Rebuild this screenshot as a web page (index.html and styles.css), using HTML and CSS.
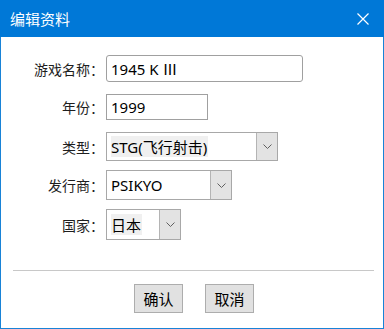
FILE: index.html
```html
<!DOCTYPE html>
<html lang="zh-CN">
<head>
    <meta charset="UTF-8">
    <title>编辑资料</title>
    <link rel="stylesheet" href="styles.css">
</head>
<body>
    <div class="dialog">
        <div class="dialog-title">
            <span class="title-text">编辑资料</span>
            <span class="close-btn">
                <svg width="12" height="12" viewBox="0 0 12 12">
                    <path d="M0.5 0.5 L11.5 11.5 M11.5 0.5 L0.5 11.5" stroke="#fff" stroke-width="1.2" fill="none"/>
                </svg>
            </span>
        </div>

        <div class="form">
            <div class="form-row row-name">
                <label class="form-label">游戏名称：</label>
                <div class="text-input input-name">1945 K <span class="cjk">Ⅲ</span></div>
            </div>
            <div class="form-row row-year">
                <label class="form-label">年份：</label>
                <div class="text-input input-year">1999</div>
            </div>
            <div class="form-row row-type">
                <label class="form-label">类型：</label>
                <div class="select select-type">
                    <span class="select-value"><span class="selected">STG(飞行射击)</span></span>
                    <span class="select-arrow"><svg width="9" height="5" viewBox="0 0 9 5"><path d="M0.5 0.5 L4.5 4.5 L8.5 0.5" stroke="#606060" stroke-width="1" fill="none"/></svg></span>
                </div>
            </div>
            <div class="form-row row-publisher">
                <label class="form-label">发行商：</label>
                <div class="select select-publisher">
                    <span class="select-value">PSIKYO</span>
                    <span class="select-arrow"><svg width="9" height="5" viewBox="0 0 9 5"><path d="M0.5 0.5 L4.5 4.5 L8.5 0.5" stroke="#606060" stroke-width="1" fill="none"/></svg></span>
                </div>
            </div>
            <div class="form-row row-country">
                <label class="form-label">国家：</label>
                <div class="select select-country">
                    <span class="select-value"><span class="selected">日本</span></span>
                    <span class="select-arrow"><svg width="9" height="5" viewBox="0 0 9 5"><path d="M0.5 0.5 L4.5 4.5 L8.5 0.5" stroke="#606060" stroke-width="1" fill="none"/></svg></span>
                </div>
            </div>
        </div>

        <div class="separator"></div>

        <div class="actions">
            <button class="btn">确认</button>
            <button class="btn">取消</button>
        </div>
    </div>
</body>
</html>
```

FILE: styles.css
```css
body, html {
    margin: 0;
    padding: 0;
    font-family: "Noto Sans", "Noto Sans CJK SC", sans-serif;
    background: #fff;
}
.dialog {
    width: 384px;
    height: 329px;
    box-sizing: border-box;
    border: 1px solid #1883d7;
    border-top: none;
    background: #fff;
}
.dialog-title {
    height: 37px;
    margin: 0 -1px;
    background: #0078d7;
    display: flex;
    align-items: center;
    justify-content: space-between;
    padding: 0 15px 0 10px;
    color: #fff;
}
.title-text {
    font-family: "Noto Sans CJK SC", sans-serif;
    font-size: 15px;
    line-height: 20px;
}
.close-btn {
    display: flex;
    width: 12px;
    height: 12px;
    margin-top: 1px;
}
.form {
    padding-top: 18px;
}
.form-row {
    display: flex;
    align-items: center;
}
.form-label {
    width: 103px;
    text-align: right;
    margin-right: 2px;
    font-family: "Noto Sans CJK SC", sans-serif;
    font-size: 14px;
    color: #1e1e1e;
}
.cjk {
    font-family: "Noto Sans CJK SC", sans-serif;
}
.text-input {
    box-sizing: border-box;
    border: 1px solid #a0a0a0;
    padding-left: 4px;
    font-size: 15px;
    color: #000;
    display: flex;
    align-items: center;
    white-space: pre;
}
.input-name {
    width: 197px;
    height: 27px;
    border-radius: 3px;
}
.row-year {
    margin-top: 12px;
}
.input-year {
    width: 102px;
    height: 26px;
}
.select {
    box-sizing: border-box;
    border: 1px solid #a8a8a8;
    display: flex;
    font-size: 15px;
    color: #000;
}
.select-value {
    flex: 1;
    display: flex;
    align-items: center;
    padding-left: 4px;
}
.selected {
    background: #f0f0f0;
    padding-right: 1px;
}
.select-arrow {
    width: 20px;
    border-left: 1px solid #b4b4b4;
    background: #e3e3e3;
    display: flex;
    align-items: center;
    justify-content: center;
}
.row-type {
    margin-top: 12px;
}
.select-type {
    width: 172px;
    height: 29px;
}
.row-publisher {
    margin-top: 9px;
}
.select-publisher {
    width: 126px;
    height: 30px;
}
.row-country {
    margin-top: 9px;
}
.select-country {
    width: 75px;
    height: 31px;
}
.separator {
    height: 1px;
    background: #c8c8c8;
    margin: 30px 9px 0 12px;
}
.actions {
    display: flex;
    justify-content: center;
    gap: 22px;
    padding-top: 13px;
    padding-left: 4px;
}
.btn {
    width: 49px;
    height: 29px;
    box-sizing: border-box;
    border: 1px solid #adadad;
    background: #e1e1e1;
    font-family: "Noto Sans CJK SC", sans-serif;
    font-size: 15px;
    color: #000;
    padding: 0;
}
```
